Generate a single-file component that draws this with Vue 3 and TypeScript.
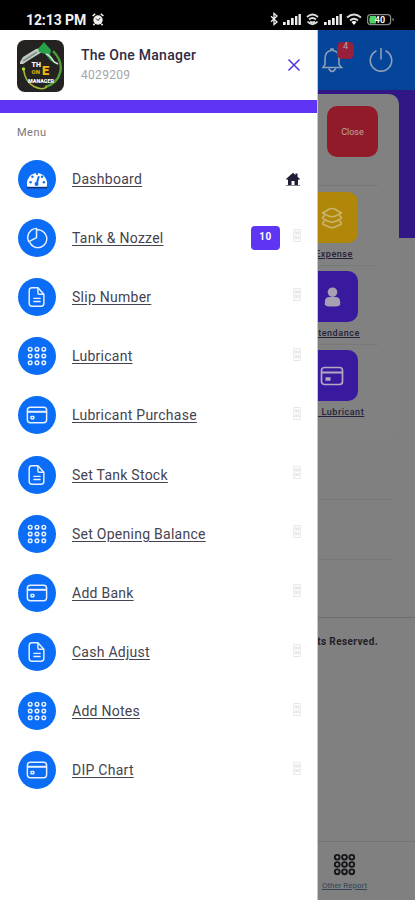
<script setup lang="ts">
type IconName = 'gauge' | 'pie' | 'doc' | 'apps' | 'card'

interface MenuItem {
  label: string
  icon: IconName
  badge?: string
  home?: boolean
}

const menu: MenuItem[] = [
  { label: 'Dashboard', icon: 'gauge', home: true },
  { label: 'Tank & Nozzel', icon: 'pie', badge: '10' },
  { label: 'Slip Number', icon: 'doc' },
  { label: 'Lubricant', icon: 'apps' },
  { label: 'Lubricant Purchase', icon: 'card' },
  { label: 'Set Tank Stock', icon: 'doc' },
  { label: 'Set Opening Balance', icon: 'apps' },
  { label: 'Add Bank', icon: 'card' },
  { label: 'Cash Adjust', icon: 'doc' },
  { label: 'Add Notes', icon: 'apps' },
  { label: 'DIP Chart', icon: 'card' },
]

const dots = [5, 12, 19]
</script>

<template>
  <div class="phone">
    <header class="status">
      <span class="time">12:13 PM</span>
      <svg class="alarm" viewBox="0 0 12 13">
        <circle cx="6" cy="7" r="4.7" fill="#eee" />
        <path d="M.6 3 3.2.8M11.4 3 8.8.8M2.6 10.8 1.4 12.3M9.4 10.8l1.2 1.5" stroke="#eee" stroke-width="1.6" />
        <path d="M4 5.5 6 7.500 8.200 5" stroke="#222" fill="none" />
      </svg>
      <span class="grow"></span>
      <svg class="system" viewBox="0 0 130 16">
        <g fill="none" stroke="#eee" stroke-width="1.3">
          <path d="M2 5.3 8 11 5 13.5V2.5L8 5 2 10.7" />
        </g>
        <g fill="#eee">
          <path d="M14 11h2.700v3H14zM18 9h2.700v5H18zM22 7h2.700v7H22zM26 5h2.400v9H26zM29.500 3h2.400v11h-2.400z" />
          <path d="M55 11h2.700v3H55zM59 9h2.700v5H59zM63 7h2.700v7H63zM67 5h2.400v9H67zM70.500 3h2.400v11h-2.400z" />
        </g>
        <g fill="none" stroke="#ddd" stroke-width="1.700">
          <path d="M38 6q5.500-5 11 0M40 8.500q3.500-3 7 0M38.500 10.500q5 6 10 0M41 10.500q2.500 2 5 0" />
          <path d="M78 6.500q7-6 14 0M81 9.500q4-3.500 8 0" />
        </g>
        <path d="M82.500 11q2.500-2 5 0L85 14z" fill="#fff" />
        <rect x="98.600" y="3.600" width="23" height="10" rx="3" fill="none" stroke="#888" stroke-width="1.300" />
        <path d="M101 5h6v7.500h-6q-1.500-3.700 0-7.500z" fill="#4bd964" />
        <path d="M123.500 7q3 1.500 0 3z" fill="#999" />
        <text x="111" y="12" text-anchor="middle" class="charge">40</text>
      </svg>
    </header>

    <div class="screen">
      <main class="page">
        <div class="topbar">
          <div class="bell">
            <svg viewBox="0 0 24 28">
              <path d="M3 21.500 5 18.500V13c0-5 2.500-8 6-8.500V3h2v1.500c4 .5 6 3.500 6 8.500v5.500l2.500 3z" />
              <path d="M9 23q3 5 6.500 0" />
            </svg>
            <span class="count">4</span>
          </div>
          <svg class="power" viewBox="0 0 26 26">
            <path d="M13 1.500V12M8 4a10.700 10.700 0 1 0 10 0" />
          </svg>
        </div>
        <div class="hero"></div>
        <section class="panel">
          <div class="close-row"><span class="tile red">Close</span></div>
          <div class="cell">
            <span class="tile yellow">
              <svg viewBox="0 0 24 24"><path d="m2.500 7 6-3.500Q12 1.500 15.500 3.500l6 3.500-6 3Q12 11.500 8.500 10zM5 9.500Q1 11.500 3.500 13L9 15.500q3 1.300 6 0l5.500-2.500q2.500-1.500-1.500-3.500M5 15Q1 17 3.500 18.500L9 21q3 1.300 6 0l5.500-2.500Q23 17 19 15" /></svg>
            </span>
            <span class="caption">Expense</span>
          </div>
          <div class="cell">
            <span class="tile violet">
              <svg class="solid" viewBox="0 0 24 24"><circle cx="12" cy="7" r="5" /><path d="M4 20v-3q0-5 5-5h6q5 0 5 5v3q-1 2-8 2t-8-2z" /></svg>
            </span>
            <span class="caption">Attendance</span>
          </div>
          <div class="cell last">
            <span class="tile violet">
              <svg viewBox="0 0 24 24"><rect x="1.500" y="3.500" width="21" height="17" rx="3" /><path d="M2 8.500h20" stroke-width="2" /><path d="M5.500 15h5" stroke-width="3.500" /></svg>
            </span>
            <span class="caption">Set Lubricant</span>
          </div>
        </section>
        <section class="strip"></section>
        <section class="strip"></section>
        <p class="rights">All Rights Reserved.</p>
        <nav class="bottom">
          <svg viewBox="0 0 24 24">
            <template v-for="y in dots" :key="y">
              <circle v-for="x in dots" :key="x" :cx="x" :cy="y" r="2.300" />
            </template>
          </svg>
          <span>Other Report</span>
        </nav>
      </main>

      <aside class="drawer">
        <div class="profile">
          <svg class="logo" viewBox="0 0 47 52">
            <rect width="47" height="52" rx="8" fill="#242322" />
            <path d="M36 11C49 24 45 42 28 47" fill="none" stroke="#4e9f36" stroke-width="2.400" />
            <path d="M6.500 29Q8 42 17 46.500T30 46.500" fill="none" stroke="#a9b836" stroke-width="1.600" />
            <circle cx="6.500" cy="29" r="1.700" fill="#a7dd35" />
            <path d="M3 22 6 17 19 9l5-1 1 4-13 8-6 4-3 0z" fill="#c4cbc6" />
            <path d="M6 21 20 12" stroke="#80908a" stroke-width="1.500" />
            <path d="M21 9 27 2l7 8-1 5 6 8-5-2-6-7-6-2z" fill="#29a34a" />
            <path d="M29 14q4 1 8 8l4 2" fill="none" stroke="#d8e5da" stroke-width="1.500" />
            <text x="14.500" y="27" class="logo-the">TH</text>
            <text x="14.500" y="34" class="logo-one">ON</text>
            <text x="25" y="34.500" class="logo-e">E</text>
            <text x="11" y="42.500" class="logo-man" textLength="26" lengthAdjust="spacingAndGlyphs">MANAGER</text>
          </svg>
          <div class="who">
            <strong>The One Manager</strong>
            <span>4029209</span>
          </div>
          <svg class="close" viewBox="0 0 14 14"><path d="m1.500 1.500 11 11m0-11-11 11" /></svg>
        </div>
        <div class="rule"></div>
        <h2 class="heading">Menu</h2>
        <ul class="menu">
          <li v-for="item in menu" :key="item.label">
            <span class="bubble">
              <svg v-if="item.icon === 'gauge'" viewBox="0 0 24 24">
                <path d="M1.500 20.500a11 11.500 0 1 1 21 0z" fill="#fff" stroke="none" />
                <path d="M1 21.500h22" stroke="#1b2f6e" stroke-width="1.500" />
                <path d="M11.500 18 14 9" stroke="#0b6cf5" stroke-width="2.200" />
                <g fill="#0b6cf5" stroke="none">
                  <circle cx="5" cy="15.500" r="1.300" /><circle cx="7" cy="9.500" r="1.300" />
                  <circle cx="12" cy="6.500" r="1.200" /><circle cx="17.500" cy="9.500" r="1.300" />
                  <circle cx="19.500" cy="15.500" r="1.300" /><circle cx="11.500" cy="17.500" r="2.200" />
                </g>
              </svg>
              <svg v-else-if="item.icon === 'pie'" viewBox="0 0 24 24">
                <path d="M11.500 1.500v10L3 16A10 10 0 0 1 11.500 1.500z" />
                <path d="M11.500 3.200A9.700 9.700 0 1 1 4 16.500" />
              </svg>
              <svg v-else-if="item.icon === 'doc'" viewBox="0 0 24 24">
                <path d="M6.500 2H13l6.500 7v10q0 3-3 3h-10q-3 0-3-3V5q0-3 3-3z" />
                <path d="M13 2v5.500q0 1.500 1.500 1.500h5M8 13.500h8M8 17h8" />
              </svg>
              <svg v-else-if="item.icon === 'apps'" viewBox="0 0 24 24">
                <template v-for="y in dots" :key="y">
                  <circle v-for="x in dots" :key="x" :cx="x + (x - 12) * 0.06" :cy="y + (y - 12) * 0.06" r="2" />
                </template>
              </svg>
              <svg v-else viewBox="0 0 24 24">
                <rect x="1.500" y="3.500" width="21" height="17" rx="3.200" />
                <path d="M2 8.500h20" stroke-width="2.200" />
                <rect x="5.500" y="13.500" width="3" height="2.500" rx=".5" />
              </svg>
            </span>
            <a class="label">{{ item.label }}</a>
            <span v-if="item.badge" class="badge">{{ item.badge }}</span>
            <svg v-if="item.home" class="home" viewBox="0 0 14 14">
              <path d="M0 7 7 .8l2.500 2.300V1.500h2v3.300L14 7l-1 1-1-.8V13H8.500V9h-3v4H2V7.200L1 8z" />
              <path d="M0 13.600h14" stroke="#555" stroke-width=".8" />
            </svg>
            <svg v-else class="missing" viewBox="0 0 8 14">
              <path d="M.5.500h7v13h-7zM2 3h1.500v2.500H2zM4.700 3h1.500v2.500H4.700zM2 8h1.500v2.500H2zM4.700 8h1.500v2.500H4.700z" />
            </svg>
          </li>
        </ul>
      </aside>
    </div>
  </div>
</template>

<style>
body {
  margin: 0;
  background: #808080;
}
</style>

<style scoped>
.phone {
  width: 415px;
  height: 900px;
  display: flex;
  flex-direction: column;
  overflow: hidden;
  font-family: Roboto, "Liberation Sans", sans-serif;
}
svg {
  flex: none;
  display: block;
}
.status {
  height: 30px;
  flex: none;
  box-sizing: border-box;
  padding: 9px 26px 0;
  background: #000;
  color: #f2f2f2;
  display: flex;
  align-items: flex-start;
}
.time {
  font-size: 14px;
  line-height: 22px;
  font-weight: 700;
  width: 60px;
  letter-spacing: -.1px;
  white-space: nowrap;
}
.alarm {
  width: 12px;
  height: 13px;
  margin: 4px 0 0 6px;
}
.grow {
  flex: 1;
}
.system {
  width: 130px;
  height: 16px;
  margin: 2px -9.500px 0 0;
}
.charge {
  font: 700 9px Roboto, sans-serif;
  fill: #fff;
}
.screen {
  position: relative;
  flex: 1;
  min-height: 0;
}
.page {
  height: 870px;
  display: flex;
  flex-direction: column;
  background: #808080;
}
.topbar {
  height: 60px;
  flex: none;
  background: #04459a;
  display: flex;
  justify-content: flex-end;
  align-items: center;
  gap: 24px;
  padding-right: 21px;
}
.bell {
  position: relative;
}
.bell svg {
  width: 24px;
  height: 28px;
}
.bell svg,
.power {
  fill: none;
  stroke: #8f9fb8;
  stroke-width: 1.600;
  stroke-linecap: round;
}
.count {
  position: absolute;
  left: 17px;
  top: -4px;
  width: 17px;
  height: 17px;
  border-radius: 5px;
  background: #97203a;
  color: #b9a5ac;
  font-size: 9px;
  line-height: 9px;
  text-align: center;
}
.power {
  width: 26px;
  height: 26px;
}
.hero {
  height: 148px;
  flex: none;
  background: #311786;
}
.panel {
  height: 346px;
  flex: none;
  box-sizing: border-box;
  margin: -144px 16px 0;
  border-radius: 10px;
  background: #818181;
  padding: 12px 21px 0 0;
}
.close-row {
  height: 79px;
  display: flex;
  justify-content: flex-end;
  border-bottom: 1px solid #777;
  margin-bottom: 6px;
}
.tile {
  width: 51px;
  height: 51px;
  flex: none;
  border-radius: 10px;
  display: flex;
  align-items: center;
  justify-content: center;
  color: #b9a9aa;
  font-size: 9px;
}
.tile svg {
  width: 24px;
  height: 24px;
  fill: none;
  stroke: #b4a9be;
  stroke-width: 1.700;
  stroke-linejoin: round;
}
.tile .solid {
  fill: #a79fb2;
  stroke: none;
  width: 23px;
}
.red {
  background: #911b29;
}
.yellow {
  background: #b08708;
}
.yellow svg {
  stroke: #c9b56e;
}
.violet {
  background: #391a9f;
}
.cell {
  height: 74px;
  box-sizing: border-box;
  margin-bottom: 5px;
  padding-left: 270px;
  border-bottom: 1px solid #797979;
  display: flex;
  flex-direction: column;
  align-items: center;
  gap: 4px;
}
.last {
  border-bottom-color: transparent;
}
.caption {
  color: #24213a;
  font-size: 9px;
  line-height: 14px;
  font-weight: 500;
  letter-spacing: .55px;
  text-decoration: underline;
  white-space: nowrap;
  margin-left: 4px;
}
.strip {
  height: 59px;
  flex: none;
  margin: 0 24px 0 16px;
  border-bottom: 1px solid #777;
}
.rights {
  flex: none;
  box-sizing: border-box;
  height: 60px;
  margin: 57px 0 0;
  padding: 17px 37px 0 0;
  border-top: 1px solid #6e6e6e;
  text-align: right;
  color: #222129;
  font-size: 10px;
  line-height: 14px;
  font-weight: 700;
  letter-spacing: .4px;
}
.bottom {
  margin: auto 0 0 auto;
  width: 97px;
  height: 59px;
  flex: none;
  box-sizing: border-box;
  border-top: 1px solid #747474;
  padding: 10px 44px 0 0;
  display: flex;
  flex-direction: column;
  align-items: center;
  gap: 3px;
  color: #30465a;
  font-size: 8px;
  line-height: 12px;
  text-decoration: underline;
  white-space: nowrap;
}
.bottom svg {
  width: 25px;
  height: 25px;
  fill: none;
  stroke: #17171b;
  stroke-width: 1.800;
}
.drawer {
  position: absolute;
  left: 0;
  top: 0;
  width: 318px;
  height: 870px;
  background: #fff;
  box-sizing: border-box;
  border-right: 1px solid #c8c8c8;
  display: flex;
  flex-direction: column;
}
.profile {
  height: 70px;
  flex: none;
  box-sizing: border-box;
  padding: 10px 16px 0 17px;
  display: flex;
}
.logo {
  width: 47px;
  height: 52px;
}
.logo-the {
  font: 900 7px Roboto, sans-serif;
  fill: #fff;
}
.logo-one {
  font: 900 6px Roboto, sans-serif;
  fill: #d9a714;
}
.logo-e {
  font: 900 13px Roboto, sans-serif;
  fill: #f5b512;
}
.logo-man {
  font: 900 4.500px Roboto, sans-serif;
  fill: #fff;
}
.who {
  margin-left: 17px;
  padding-top: 5px;
  flex: 1;
  display: flex;
  flex-direction: column;
}
.who strong {
  color: #302c46;
  font-size: 14px;
  line-height: 20px;
  font-weight: 500;
  letter-spacing: .26px;
}
.who span {
  color: #a4a6aa;
  font-size: 12px;
  line-height: 20px;
  letter-spacing: .3px;
}
.close {
  width: 14px;
  height: 14px;
  margin-top: 18px;
  fill: none;
  stroke: #5335d5;
  stroke-width: 1.500;
}
.rule {
  height: 13px;
  flex: none;
  background: #5f34f5;
}
.heading {
  margin: 12px 0 0 17px;
  color: #77777d;
  font-size: 11px;
  line-height: 16px;
  font-weight: 400;
  letter-spacing: .5px;
}
.menu {
  list-style: none;
  margin: 8px 0 0;
  padding: 0 16px 0 17.500px;
}
.menu li {
  height: 59.200px;
  display: flex;
  align-items: center;
}
.bubble {
  width: 38px;
  height: 38px;
  flex: none;
  border-radius: 50%;
  background: #0b6cf5;
  display: flex;
  align-items: center;
  justify-content: center;
}
.bubble svg {
  width: 22px;
  height: 22px;
  fill: none;
  stroke: #e8f1ff;
  stroke-width: 1.600;
  stroke-linejoin: round;
}
.label {
  margin: 0 auto 0 16.500px;
  color: #454350;
  font-size: 14px;
  line-height: 20px;
  letter-spacing: .26px;
  text-decoration: underline;
  text-underline-offset: 2px;
}
.badge {
  width: 29px;
  height: 24px;
  margin-right: 13px;
  box-sizing: border-box;
  border-radius: 4px;
  background: #5d35f3;
  color: #fff;
  text-align: center;
  font-size: 10px;
  line-height: 21px;
  font-weight: 700;
  letter-spacing: .5px;
}
.home {
  width: 14px;
  height: 14px;
  margin-right: 1px;
  fill: #211d38;
}
.missing {
  width: 8px;
  height: 13px;
  margin: -4px 0 0;
  fill: none;
  stroke: #dedede;
  stroke-width: .8;
}
</style>
